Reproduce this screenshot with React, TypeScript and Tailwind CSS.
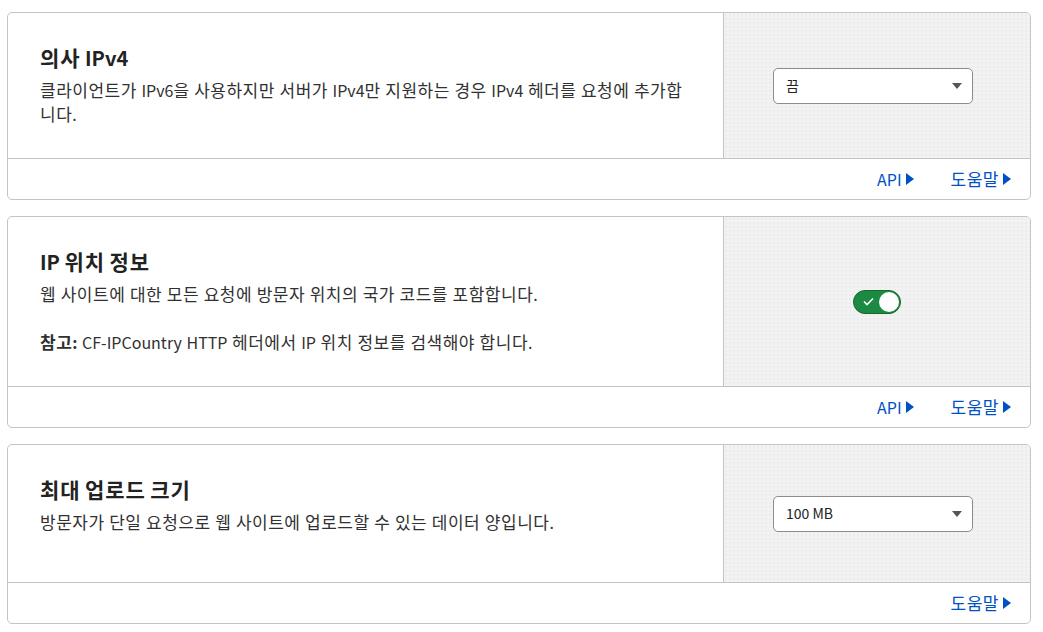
import React from 'react';

// Hangul runs get a little more room so syllables take the same width as in the reference
const hangul = (text: string, cls: string) =>
  text.split(/([가-힣]+)/).map((part, i) =>
    /[가-힣]/.test(part) ? (
      <span key={i} className={cls}>
        {part}
      </span>
    ) : (
      part
    )
  );

const Caret = () => (
  <svg width="8" height="12" viewBox="0 0 8 12" className="ml-[4px] inline-block">
    <path d="M0 0 L8 6 L0 12 Z" fill="#0051c3" />
  </svg>
);

const FooterLink = ({ label }: { label: string }) => (
  <a className="flex cursor-pointer items-center text-[16px] text-[#0051c3]">
    {hangul(label, 'text-[17px] tracking-[0.5px]')}
    <Caret />
  </a>
);

const Select = ({ value }: { value: string }) => (
  <div className="mr-[8px] flex h-[36px] w-[200px] items-center justify-between rounded-[5px] border border-[#8c8c8c] bg-white pl-[12px] pr-[10px] text-[14px] text-[#222]">
    <span>{value}</span>
    <svg width="10" height="6" viewBox="0 0 10 6">
      <path d="M0 0 L10 0 L5 6 Z" fill="#555" />
    </svg>
  </div>
);

const Toggle = () => (
  <div className="relative flex h-[24px] w-[48px] items-center rounded-full border border-[#17692f] bg-[#1d8a43]">
    <svg width="11" height="9" viewBox="0 0 11 9" className="ml-[9px]">
      <path d="M1 4.5 L4 7.5 L10 1.5" stroke="white" strokeWidth="1.6" fill="none" />
    </svg>
    <div className="absolute right-[1px] top-[1px] h-[20px] w-[20px] rounded-full bg-white" />
  </div>
);

const Desc = ({ text, className = '' }: { text: string; className?: string }) => (
  <p className={className}>{hangul(text, 'text-[17px] tracking-[0.5px]')}</p>
);

type CardProps = {
  title: string;
  children: React.ReactNode;
  control: React.ReactNode;
  links: string[];
};

const Card = ({ title, children, control, links }: CardProps) => (
  <div className="overflow-hidden rounded-[5px] border border-[#c4c4c4] bg-white">
    <div className="flex border-b border-[#c4c4c4]">
      <div className="w-[715px] py-[32px] pl-[32px] pr-[36px]">
        <h3 className="mb-[8px] text-[20px] font-bold leading-[25px] text-[#222]">
          {hangul(title, 'text-[21px] tracking-[0.9px]')}
        </h3>
        <div className="text-[16px] leading-[24px] text-[#313131] [word-spacing:1px]">{children}</div>
      </div>
      <div className="flex min-h-[137px] flex-1 items-center justify-center border-l border-[#c4c4c4] bg-[#f2f2f2] bg-[radial-gradient(#e4e4e4_0.6px,transparent_0.8px)] bg-[length:4px_4px]">
        {control}
      </div>
    </div>
    <div className="flex h-[40px] items-center justify-end gap-[37px] pr-[19px]">
      {links.map((l) => (
        <FooterLink key={l} label={l} />
      ))}
    </div>
  </div>
);

export default function App() {
  return (
    <div
      className="min-h-screen bg-white pl-[7px] pt-[12px]"
      style={{ fontFamily: '"Noto Sans CJK KR", "Noto Sans", sans-serif' }}
    >
      <div className="flex w-[1024px] flex-col gap-[16px]">
        <Card title="의사 IPv4" control={<Select value="끔" />} links={['API', '도움말']}>
          <Desc text="클라이언트가 IPv6을 사용하지만 서버가 IPv4만 지원하는 경우 IPv4 헤더를 요청에 추가합니다." />
        </Card>
        <Card title="IP 위치 정보" control={<Toggle />} links={['API', '도움말']}>
          <Desc text="웹 사이트에 대한 모든 요청에 방문자 위치의 국가 코드를 포함합니다." />
          <p className="mt-[24px]">
            <b>{hangul('참고', 'text-[17px] tracking-[0.5px]')}:</b>{' '}
            {hangul('CF-IPCountry HTTP 헤더에서 IP 위치 정보를 검색해야 합니다.', 'text-[17px] tracking-[0.5px]')}
          </p>
        </Card>
        <Card title="최대 업로드 크기" control={<Select value="100 MB" />} links={['도움말']}>
          <Desc text="방문자가 단일 요청으로 웹 사이트에 업로드할 수 있는 데이터 양입니다." />
        </Card>
      </div>
    </div>
  );
}
